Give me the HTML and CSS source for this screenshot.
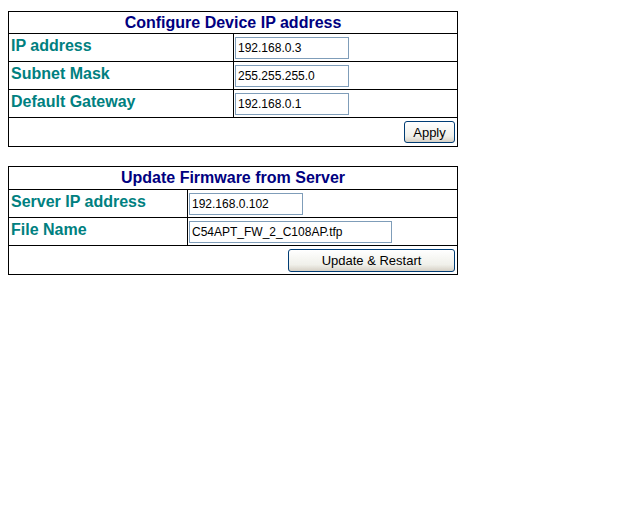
FILE: index.html
```html
<!DOCTYPE html>
<html lang="en">
  <head>
    <meta charset="UTF-8" />
    <title>Device Setup</title>
    <link rel="stylesheet" href="styles.css">
  </head>
  <body>
    <form class="panel">
      <table class="grid grid-ip">
        <tr>
          <th colspan="2" class="title">Configure Device IP address</th>
        </tr>
        <tr>
          <td class="label">IP address</td>
          <td class="field"><input type="text" class="box" value="192.168.0.3" /></td>
        </tr>
        <tr>
          <td class="label">Subnet Mask</td>
          <td class="field"><input type="text" class="box" value="255.255.255.0" /></td>
        </tr>
        <tr>
          <td class="label">Default Gateway</td>
          <td class="field"><input type="text" class="box" value="192.168.0.1" /></td>
        </tr>
        <tr>
          <td colspan="2" class="actions"><button type="button" class="btn btn-apply">Apply</button></td>
        </tr>
      </table>
    </form>

    <form class="panel">
      <table class="grid grid-fw">
        <tr>
          <th colspan="2" class="title">Update Firmware from Server</th>
        </tr>
        <tr>
          <td class="label">Server IP address</td>
          <td class="field"><input type="text" class="box" value="192.168.0.102" /></td>
        </tr>
        <tr>
          <td class="label">File Name</td>
          <td class="field"><input type="text" class="box box-wide" value="C54APT_FW_2_C108AP.tfp" /></td>
        </tr>
        <tr>
          <td colspan="2" class="actions"><button type="button" class="btn btn-update">Update &amp; Restart</button></td>
        </tr>
      </table>
    </form>
  </body>
</html>
```

FILE: styles.css
```css
body {
  margin: 8px;
  background: #fff;
  font-family: "Liberation Sans", Arial, sans-serif;
}
.panel {
  margin: 3px 0 0 0;
}
.panel + .panel {
  margin-top: 19px;
}
.grid {
  width: 450px;
  border-collapse: collapse;
  border: 1px solid #000;
}
.grid td,
.grid th {
  border: 1px solid #000;
  padding: 0 2px;
}
.title {
  height: 21px;
  color: #000080;
  font-size: 16px;
  font-weight: bold;
  text-align: center;
}
.grid-fw .title {
  height: 22px;
}
.label {
  height: 24px;
  padding-bottom: 3px !important;
  color: #008080;
  font-size: 16px;
  font-weight: bold;
  vertical-align: middle;
}
.grid-ip .label {
  width: 220px;
}
.grid-fw .label {
  width: 174px;
}
.field {
  vertical-align: middle;
  padding-left: 1px !important;
}
.box {
  display: block;
  box-sizing: border-box;
  width: 114px;
  height: 22px;
  margin: 0;
  padding: 0 2px;
  border: 1px solid #7f9db9;
  font-family: "Liberation Sans", Arial, sans-serif;
  font-size: 12px;
  color: #000;
}
.box-wide {
  width: 203px;
}
.actions {
  height: 28px;
  text-align: right;
  vertical-align: middle;
}
.btn {
  box-sizing: border-box;
  height: 22px;
  padding: 0;
  border: 1px solid #003c74;
  border-radius: 3px;
  background: linear-gradient(#ffffff, #f0f0ea 70%, #d6d0c5);
  font-family: "Liberation Sans", Arial, sans-serif;
  font-size: 13px;
  color: #000;
  vertical-align: middle;
}
.btn-apply {
  width: 51px;
}
.btn-update {
  width: 167px;
  height: 23px;
}
```
